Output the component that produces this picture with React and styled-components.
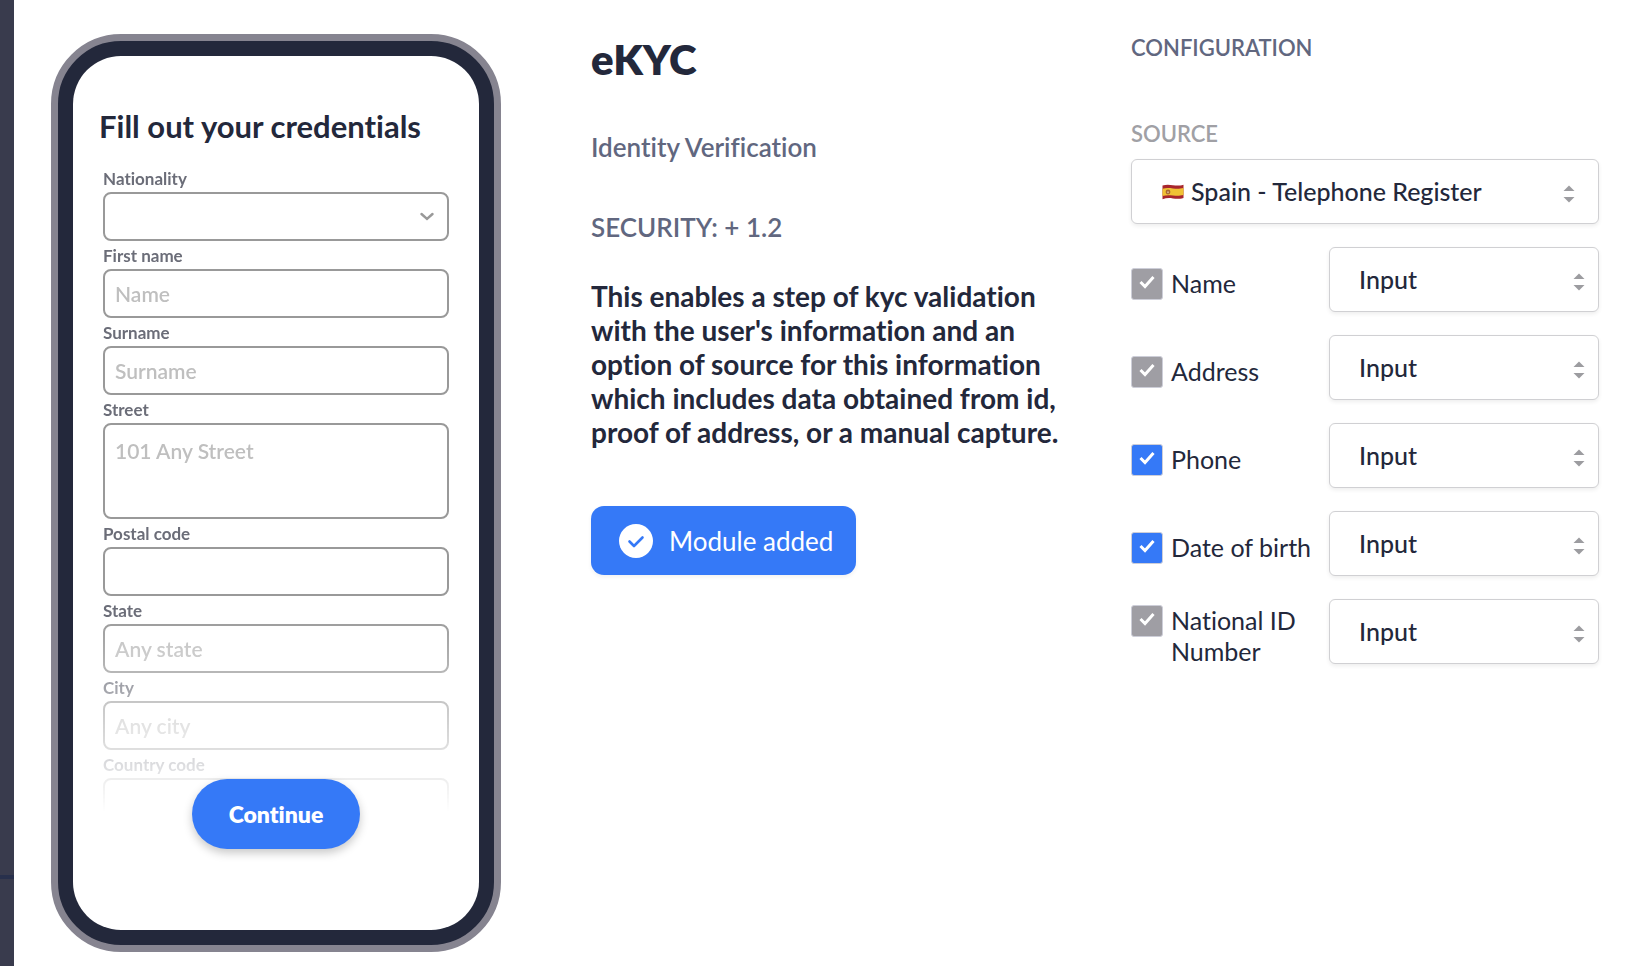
import React from 'react'
import styled, { createGlobalStyle } from 'styled-components'

const GlobalStyle = createGlobalStyle`
  * {
    box-sizing: border-box;
  }

  body {
    margin: 0;
    background: #ffffff;
    color: #23283b;
    font-family: Lato, "Open Sans", sans-serif;
    font-variant-ligatures: no-common-ligatures;
  }

  h1, h2, h3, p {
    margin: 0;
  }

  button, input, select, textarea {
    font-family: inherit;
    font-variant-ligatures: inherit;
  }
`

const Page = styled.div`
  display: flex;
  min-height: 100vh;
`

const Sidebar = styled.aside`
  display: flex;
  flex-direction: column;
  flex: 0 0 14px;
  background: #393b4d;
`

const SidebarTop = styled.div`
  flex: 1;
  border-bottom: 4px solid #28304c;
`

const SidebarBottom = styled.div`
  height: 87px;
`

const Main = styled.main`
  flex: 1;
  display: grid;
  grid-template-columns: 450px minmax(0, 630fr) minmax(0, 468fr);
  align-items: start;
  padding: 34px 29px 14px 37px;
`

/* phone preview */

const Phone = styled.section`
  border: 7px solid #868490;
  border-radius: 70px;
  background: #23283b;
  padding: 15px;
`

const Screen = styled.div`
  display: flex;
  flex-direction: column;
  align-items: center;
  height: 874px;
  padding: 50px 30px 0;
  border-radius: 48px;
  background: #ffffff;
`

const ScreenTitle = styled.h2`
  align-self: flex-start;
  margin-left: -4px;
  font-size: 31px;
  line-height: 40px;
  font-weight: 700;
`

const Form = styled.form`
  align-self: stretch;
  height: 648px;
  margin-top: 18px;
  overflow: hidden;
  mask-image: linear-gradient(#000 0, #000 450px, transparent 648px);
`

const Field = styled.div`
  display: grid;
`

const FieldLabel = styled.label`
  height: 28px;
  padding-top: 5px;
  font-size: 17px;
  line-height: 20px;
  font-weight: 700;
  color: #6b6d78;
`

const control = `
  width: 100%;
  border: 2px solid #999999;
  border-radius: 8px;
  background: #ffffff;
  padding: 0 10px;
  font-size: 21px;
  font-weight: 600;
  color: #23283b;
  outline: none;

  &::placeholder {
    color: #bfbfbf;
    opacity: 1;
  }
`

const TextInput = styled.input`
  ${control}
  height: 49px;
`

const TextArea = styled.textarea`
  ${control}
  display: block;
  height: 96px;
  padding-top: 13px;
  line-height: 26px;
  resize: none;
`

const Nationality = styled.div`
  display: grid;
  align-items: center;

  > * {
    grid-area: 1 / 1;
  }

  svg {
    justify-self: end;
    margin-right: 15px;
    pointer-events: none;
  }
`

const NationalitySelect = styled.select`
  ${control}
  height: 49px;
  appearance: none;
`

const ContinueButton = styled.button`
  flex: none;
  width: 168px;
  height: 70px;
  margin-top: -33px;
  border: none;
  border-radius: 35px;
  background: #3579f7;
  color: #ffffff;
  font-size: 23px;
  font-weight: 800;
  z-index: 1;
  box-shadow: 0 4px 10px rgba(0, 0, 0, 0.22);
`

/* module description */

const Description = styled.section`
  display: flex;
  flex-direction: column;
  align-items: flex-start;
  padding: 0 50px 0 90px;
`

const Title = styled.h1`
  font-size: 42px;
  line-height: 51px;
  font-weight: 800;
`

const Subtitle = styled.p`
  margin-top: 44px;
  font-size: 26px;
  line-height: 36px;
  font-weight: 600;
  color: #61677f;
`

const Text = styled.p`
  margin-top: 34px;
  font-size: 28px;
  line-height: 34px;
  font-weight: 700;
`

const ModuleButton = styled.button`
  display: flex;
  align-items: center;
  gap: 16px;
  height: 69px;
  margin-top: 57px;
  padding: 0 23px 0 28px;
  border: none;
  border-radius: 13px;
  background: #3579f7;
  color: #ffffff;
  font-size: 26px;
  box-shadow: 0 2px 4px rgba(0, 0, 0, 0.06);
`

/* configuration */

const Config = styled.section`
  display: flex;
  flex-direction: column;
`

const ConfigTitle = styled.h3`
  font-size: 22px;
  line-height: 28px;
  font-weight: 600;
  color: #61677f;
`

const SourceLabel = styled.label`
  margin: 58px 0 11px;
  font-size: 22px;
  line-height: 28px;
  font-weight: 600;
  color: #a0a0a5;
`

const SelectBox = styled.div`
  display: grid;
  align-items: center;

  > * {
    grid-area: 1 / 1;
  }
`

const Select = styled.select`
  width: 100%;
  height: 65px;
  padding: 0 40px 2px ${props => (props.$flag ? 59 : 29)}px;
  border: 1px solid #d0d0d3;
  border-radius: 6px;
  background: #ffffff;
  color: #23283b;
  font-size: 25px;
  font-weight: 500;
  appearance: none;
  box-shadow: 0 2px 4px rgba(0, 0, 0, 0.07);
`

const FlagIcon = styled.svg`
  margin-left: 31px;
  pointer-events: none;
`

const ArrowsIcon = styled.svg`
  justify-self: end;
  margin-top: 5px;
  margin-right: ${props => (props.$inset ? 24 : 14)}px;
  pointer-events: none;
`

const Rows = styled.div`
  display: grid;
  grid-auto-rows: 65px;
  gap: 23px;
  margin-top: 23px;
`

const Row = styled.div`
  display: grid;
  grid-template-columns: 198px 1fr;
  grid-template-rows: 65px;
  align-items: center;
`

const Option = styled.div`
  display: flex;
  align-items: flex-start;
  gap: 8px;
  padding-top: 8px;
`

const Tick = styled.div`
  display: grid;
  flex: none;

  > * {
    grid-area: 1 / 1;
  }

  svg {
    justify-self: center;
    margin-top: 7px;
    pointer-events: none;
  }
`

const Checkbox = styled.input`
  width: 32px;
  height: 32px;
  margin: 0;
  border: 1px solid #cdced8;
  border-radius: 3px;
  background: #3579f7;
  appearance: none;

  &:disabled {
    background: #9f9ea4;
  }
`

const OptionLabel = styled.label`
  font-size: 25px;
  line-height: 31px;
`

const fields = [
  { id: 'nationality', label: 'Nationality', type: 'select' },
  { id: 'first-name', label: 'First name', placeholder: 'Name' },
  { id: 'surname', label: 'Surname', placeholder: 'Surname' },
  { id: 'street', label: 'Street', placeholder: '101 Any Street', type: 'area' },
  { id: 'postal', label: 'Postal code' },
  { id: 'state', label: 'State', placeholder: 'Any state' },
  { id: 'city', label: 'City', placeholder: 'Any city' },
  { id: 'country', label: 'Country code' },
]

const options = [
  { id: 'name', label: 'Name', locked: true },
  { id: 'address', label: 'Address', locked: true },
  { id: 'phone', label: 'Phone' },
  { id: 'birth', label: 'Date of birth' },
  { id: 'national-id', label: 'National ID Number', locked: true },
]

function Arrows({ inset }) {
  return (
    <ArrowsIcon $inset={inset} width="12" height="18" viewBox="0 0 12 18" fill="#9c9ca0">
      <path d="M6 0.5 11.500 6H.5z" />
      <path d="M6 17.500 11.500 12H.5z" />
    </ArrowsIcon>
  )
}

function Flag() {
  return (
    <FlagIcon width="22" height="16" viewBox="0 0 22 16">
      <path d="M.5 1.600C4 .4 7 .6 11 1.200s6.500.5 10.500-.5v13.200c-4 1-6.500 1.100-10.500.5S4 14 .5 15.200z" fill="#a8262d" />
      <path d="M.5 4.800C4 3.800 7 4 11 4.500s6.500.5 10.500-.4v7c-4 .9-6.500.9-10.500.4S4 11 .5 12z" fill="#f0c234" />
      <circle cx="6" cy="8" r="2.400" fill="#a9672f" />
      <circle cx="6" cy="8.200" r="1" fill="#d9b48a" />
    </FlagIcon>
  )
}

function FieldControl({ field }) {
  if (field.type === 'select') {
    return (
      <Nationality>
        <NationalitySelect id={field.id} />
        <svg width="14" height="10" viewBox="0 0 14 10" fill="none" stroke="#999999" strokeWidth="2.400" strokeLinecap="round">
          <path d="M1.500 2L7 7l5.500-5" />
        </svg>
      </Nationality>
    )
  }
  if (field.type === 'area') {
    return <TextArea id={field.id} placeholder={field.placeholder} />
  }
  return <TextInput id={field.id} placeholder={field.placeholder} />
}

function App() {
  return (
    <Page>
      <GlobalStyle />
      <Sidebar>
        <SidebarTop />
        <SidebarBottom />
      </Sidebar>
      <Main>
        <Phone>
          <Screen>
            <ScreenTitle>Fill out your credentials</ScreenTitle>
            <Form>
              {fields.map(field => (
                <Field key={field.id}>
                  <FieldLabel htmlFor={field.id}>{field.label}</FieldLabel>
                  <FieldControl field={field} />
                </Field>
              ))}
            </Form>
            <ContinueButton type="button">Continue</ContinueButton>
          </Screen>
        </Phone>

        <Description>
          <Title>eKYC</Title>
          <Subtitle>Identity Verification</Subtitle>
          <Subtitle>SECURITY: + 1.2</Subtitle>
          <Text>
            This enables a step of kyc validation with the user's information and an option of source
            for this information which includes data obtained from id, proof of address, or a manual
            capture.
          </Text>
          <ModuleButton type="button">
            <svg width="34" height="34" viewBox="0 0 34 34" fill="none">
              <circle cx="17" cy="17" r="17" fill="#ffffff" />
              <path d="M10.500 17.500l4.500 4.500 8.500-8.500" stroke="#3579f7" strokeWidth="2.600" strokeLinecap="round" strokeLinejoin="round" />
            </svg>
            Module added
          </ModuleButton>
        </Description>

        <Config>
          <ConfigTitle>CONFIGURATION</ConfigTitle>
          <SourceLabel htmlFor="source">SOURCE</SourceLabel>
          <SelectBox>
            <Select id="source" $flag>
              <option>Spain - Telephone Register</option>
            </Select>
            <Flag />
            <Arrows inset />
          </SelectBox>
          <Rows>
            {options.map(option => (
              <Row key={option.id}>
                <Option>
                  <Tick>
                    <Checkbox id={option.id} type="checkbox" defaultChecked disabled={option.locked} />
                    <svg width="16" height="14" viewBox="0 0 16 14" fill="none" stroke="#ffffff" strokeWidth="3">
                      <path d="M1.500 7l4.500 4.500L14.500 2" />
                    </svg>
                  </Tick>
                  <OptionLabel htmlFor={option.id}>{option.label}</OptionLabel>
                </Option>
                <SelectBox>
                  <Select aria-label={`${option.label} source`}>
                    <option>Input</option>
                  </Select>
                  <Arrows />
                </SelectBox>
              </Row>
            ))}
          </Rows>
        </Config>
      </Main>
    </Page>
  )
}

export default App
